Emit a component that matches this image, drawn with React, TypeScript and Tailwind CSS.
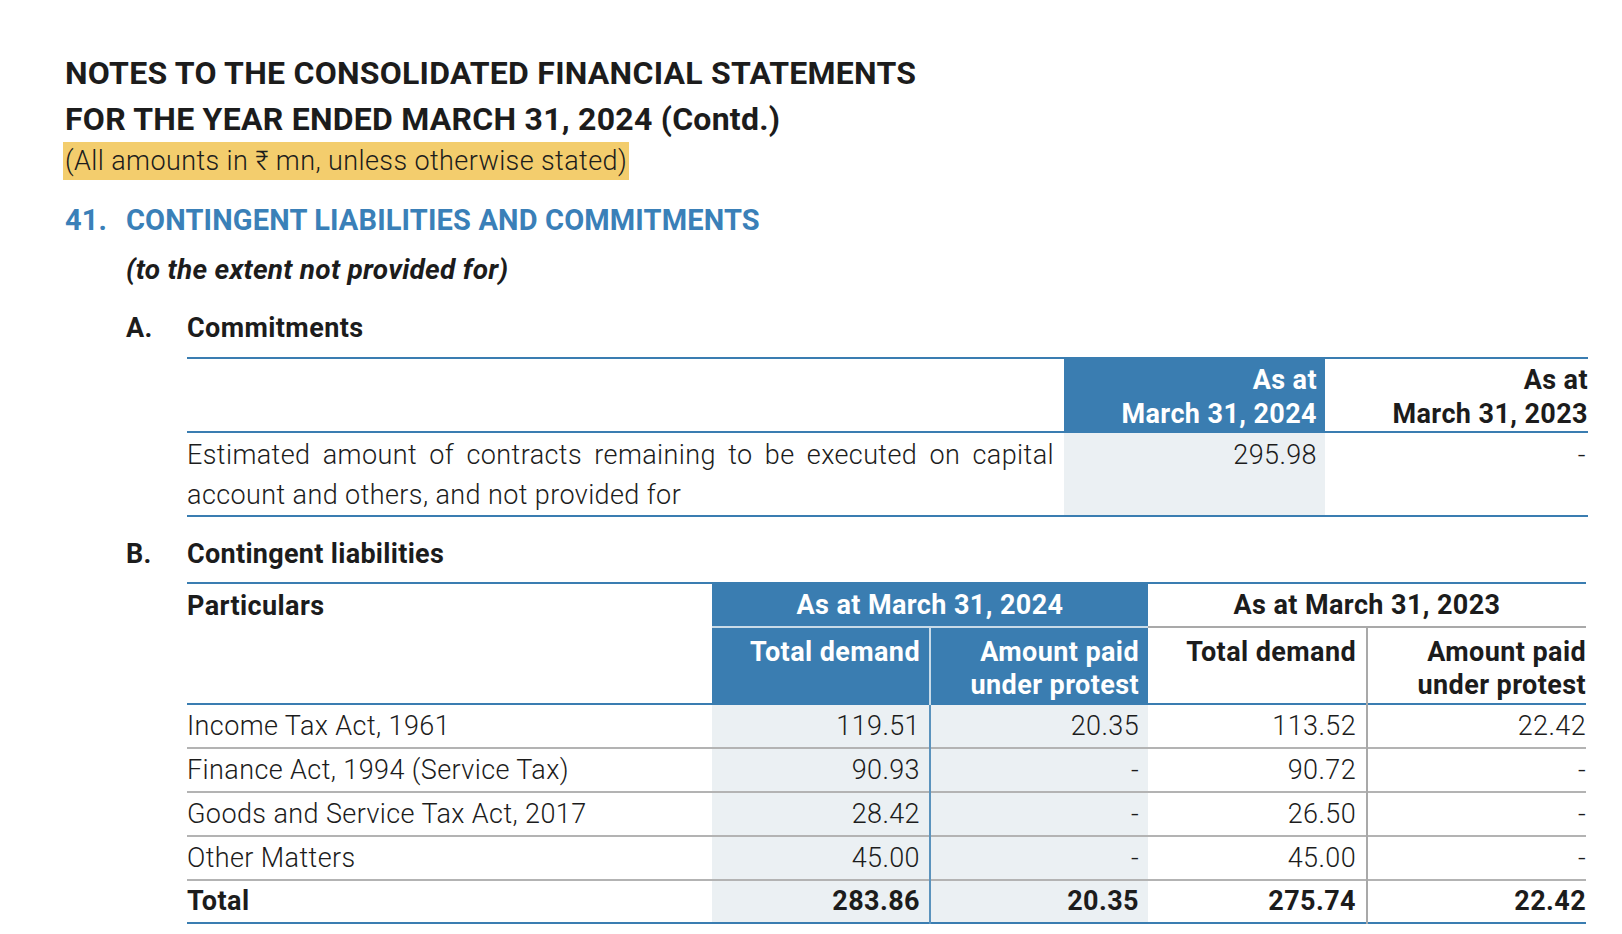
export default function App() {
  const rows = [
    { label: 'Income Tax Act, 1961', a: '119.51', b: '20.35', c: '113.52', d: '22.42' },
    { label: 'Finance Act, 1994 (Service Tax)', a: '90.93', b: '-', c: '90.72', d: '-' },
    { label: 'Goods and Service Tax Act, 2017', a: '28.42', b: '-', c: '26.50', d: '-' },
    { label: 'Other Matters', a: '45.00', b: '-', c: '45.00', d: '-' },
  ]

  return (
    <div className="min-h-screen bg-white font-['Roboto',sans-serif] text-[#1c1c1c] pl-[65px] pt-[50px]">
      {/* Page header */}
      <h1 className="text-[32px] font-bold leading-[46px] tracking-[0.25px]">
        NOTES TO THE CONSOLIDATED FINANCIAL STATEMENTS
        <br />
        FOR THE YEAR ENDED MARCH 31, 2024 (Contd.)
      </h1>
      <div className="-ml-[2px] inline-block bg-[#f3cd6d] px-[2px] text-[27px] font-light leading-[38px] tracking-[0.4px]">
        (All amounts in ₹ mn, unless otherwise stated)
      </div>

      {/* Note 41 */}
      <div className="mt-[22px] flex text-[29px] font-bold leading-[36px] tracking-[0.15px] text-[#3a80b8]">
        <span className="w-[61px]">41.</span>
        <span>CONTINGENT LIABILITIES AND COMMITMENTS</span>
      </div>
      <p className="ml-[61px] mt-[14px] text-[28px] font-bold italic leading-[36px] tracking-[0.25px]">
        (to the extent not provided for)
      </p>

      <div className="ml-[61px] mt-[22px] flex text-[27px] font-bold leading-[36px] tracking-[0.4px]">
        <span className="w-[61px]">A.</span>
        <span>Commitments</span>
      </div>

      {/* Table A */}
      <table className="ml-[122px] mt-[11px] w-[1401px] table-fixed border-collapse text-[27px] tracking-[0.4px]">
        <colgroup>
          <col className="w-[877px]" />
          <col className="w-[261px]" />
          <col className="w-[263px]" />
        </colgroup>
        <thead>
          <tr className="border-t-2 border-b-2 border-[#3a7db1]">
            <th className="h-[72px]"></th>
            <th className="bg-[#3a7db1] pr-[8px] pt-[4px] text-right align-top font-bold leading-[34px] text-white">
              As at
              <br />
              March 31, 2024
            </th>
            <th className="pt-[4px] text-right align-top font-bold leading-[34px]">
              As at
              <br />
              March 31, 2023
            </th>
          </tr>
        </thead>
        <tbody>
          <tr className="border-b-2 border-[#3a7db1]">
            <td className="pr-[10px] pt-[2px] text-justify align-top font-light leading-[40px]">
              Estimated amount of contracts remaining to be executed on capital account and others, and not provided for
            </td>
            <td className="bg-[#ebf0f3] pr-[8px] pt-[2px] text-right align-top font-light leading-[40px]">295.98</td>
            <td className="pr-[2px] pt-[2px] text-right align-top font-light leading-[40px]">-</td>
          </tr>
        </tbody>
      </table>

      <div className="ml-[61px] mt-[19px] flex text-[27px] font-bold leading-[36px] tracking-[0.3px]">
        <span className="w-[61px]">B.</span>
        <span>Contingent liabilities</span>
      </div>

      {/* Table B */}
      <table className="ml-[122px] mt-[10px] w-[1399px] table-fixed border-collapse text-[27px] tracking-[0.4px]">
        <colgroup>
          <col className="w-[525px]" />
          <col className="w-[218px]" />
          <col className="w-[218px]" />
          <col className="w-[219px]" />
          <col className="w-[219px]" />
        </colgroup>
        <thead>
          <tr className="border-t-2 border-[#3a7db1]">
            <th rowSpan={2} className="pt-[4px] text-left align-top font-bold leading-[36px]">Particulars</th>
            <th colSpan={2} className="h-[43px] border-b-2 border-[#c9dbe8] bg-[#3a7db1] pt-[1px] text-center font-bold text-white">
              As at March 31, 2024
            </th>
            <th colSpan={2} className="h-[43px] border-b-2 border-[#a9a9a9] pt-[1px] text-center font-bold">
              As at March 31, 2023
            </th>
          </tr>
          <tr className="border-b-2 border-[#3a7db1]">
            <th className="h-[77px] border-r-2 border-[#c9dbe8] bg-[#3a7db1] pr-[9px] pt-[8px] text-right align-top font-bold leading-[33px] text-white">
              Total demand
            </th>
            <th className="bg-[#3a7db1] pr-[9px] pt-[8px] text-right align-top font-bold leading-[33px] text-white">
              Amount paid
              <br />
              under protest
            </th>
            <th className="border-r-2 border-[#a9a9a9] pr-[10px] pt-[8px] text-right align-top font-bold leading-[33px]">
              Total demand
            </th>
            <th className="pt-[8px] text-right align-top font-bold leading-[33px]">
              Amount paid
              <br />
              under protest
            </th>
          </tr>
        </thead>
        <tbody className="font-light">
          {rows.map((r) => (
            <tr key={r.label} className="h-[44px] border-b-2 border-[#b3b3b3]">
              <td className="leading-[40px]">{r.label}</td>
              <td className="border-r-2 border-r-[#5b93bd] bg-[#ebf0f3] pr-[9px] text-right leading-[40px]">{r.a}</td>
              <td className="bg-[#ebf0f3] pr-[9px] text-right leading-[40px]">{r.b}</td>
              <td className="border-r-2 border-r-[#a9a9a9] pr-[10px] text-right leading-[40px]">{r.c}</td>
              <td className="text-right leading-[40px]">{r.d}</td>
            </tr>
          ))}
          <tr className="h-[43px] border-b-2 border-[#3a7db1] font-bold">
            <td className="leading-[40px]">Total</td>
            <td className="border-r-2 border-r-[#5b93bd] bg-[#ebf0f3] pr-[9px] text-right leading-[40px]">283.86</td>
            <td className="bg-[#ebf0f3] pr-[9px] text-right leading-[40px]">20.35</td>
            <td className="border-r-2 border-r-[#a9a9a9] pr-[10px] text-right leading-[40px]">275.74</td>
            <td className="text-right leading-[40px]">22.42</td>
          </tr>
        </tbody>
      </table>
    </div>
  )
}
